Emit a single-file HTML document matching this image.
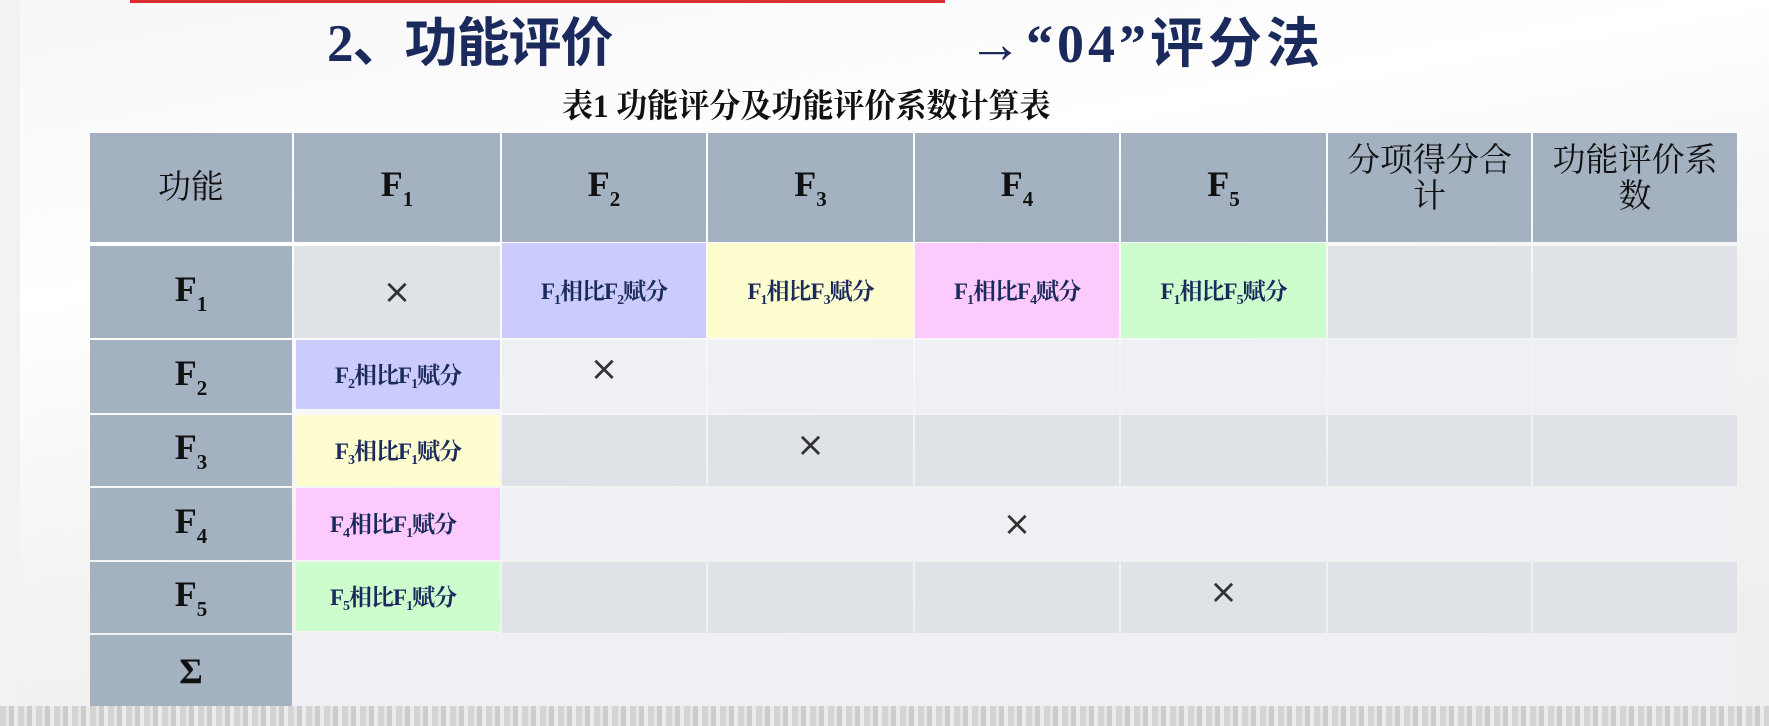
<!DOCTYPE html>
<html><head><meta charset="utf-8"><style>
*{margin:0;padding:0;box-sizing:border-box}
body{width:1769px;height:726px;overflow:hidden;position:relative;background:linear-gradient(170deg,#f7f7f7 0%,#ffffff 30%,#f2f2f2 60%,#eeeeee 100%);font-family:"Liberation Serif","Noto Serif CJK SC",serif}
.a{position:absolute}
.c{position:absolute;display:flex;align-items:center;justify-content:center;text-align:center}
.h{background:#a3b1c0;color:#111;font-weight:bold;font-size:36px}
.hz{font-family:"Liberation Serif","Noto Serif CJK SC",serif;font-weight:normal;font-size:33px;line-height:36px;color:#111}
.d{background:#dfe2e7}.l{background:#eff0f3}
.t{color:#1b2a5c;font-weight:bold;font-size:23px;letter-spacing:-1px}
.t sub{font-size:14px;vertical-align:-5px}
.h sub{font-size:21px;vertical-align:-10px}
.x{font-family:"DejaVu Sans",sans-serif;font-size:34px;color:#333;font-weight:normal}
</style></head><body>
<div class="a" style="left:0;top:0;width:20px;height:726px;background:#f2f2f2"></div>
<div class="a" style="left:130px;top:0;width:815px;height:3px;background:#d9302f"></div>
<div class="a" style="left:0;top:706px;width:1769px;height:20px;background:repeating-linear-gradient(90deg,#d4d4d4 0 6px,#e6e6e6 6px 9px,#cccccc 9px 14px,#ececec 14px 18px)"></div>
<div class="a" style="left:327px;top:12px;font-size:53px;font-weight:bold;color:#1b2a5c;font-family:'Liberation Serif','Noto Sans CJK SC',sans-serif;line-height:64px;white-space:nowrap;letter-spacing:-1px">2、功能评价</div>
<div class="a" style="left:968px;top:12px;font-size:54px;font-weight:bold;color:#1b2a5c;font-family:'Liberation Serif','Noto Sans CJK SC',sans-serif;line-height:64px;white-space:nowrap;letter-spacing:4px">→“04”评分法</div>
<div class="a" style="left:562px;top:88px;font-size:33px;font-weight:bold;color:#111;line-height:38px;white-space:nowrap;transform:scaleX(0.94);transform-origin:left">表1 功能评分及功能评价系数计算表</div>

<div class="c h hz" style="left:90px;top:133px;width:202px;height:109px"><span>功能</span></div>
<div class="c h" style="left:294px;top:133px;width:206px;height:109px"><span>F<sub>1</sub></span></div>
<div class="c h" style="left:502px;top:133px;width:204px;height:109px"><span>F<sub>2</sub></span></div>
<div class="c h" style="left:708px;top:133px;width:205px;height:109px"><span>F<sub>3</sub></span></div>
<div class="c h" style="left:915px;top:133px;width:204px;height:109px"><span>F<sub>4</sub></span></div>
<div class="c h" style="left:1121px;top:133px;width:205px;height:109px"><span>F<sub>5</sub></span></div>
<div class="c h hz" style="left:1328px;top:133px;width:203px;height:109px;padding-bottom:18px"><span>分项得分合<br>计</span></div>
<div class="c h hz" style="left:1533px;top:133px;width:204px;height:109px;padding-bottom:18px"><span>功能评价系<br>数</span></div>

<div class="c h" style="left:90px;top:246px;width:202px;height:92px"><span>F<sub>1</sub></span></div>
<div class="c h" style="left:90px;top:340px;width:202px;height:73px"><span>F<sub>2</sub></span></div>
<div class="c h" style="left:90px;top:415px;width:202px;height:71px"><span>F<sub>3</sub></span></div>
<div class="c h" style="left:90px;top:488px;width:202px;height:72px"><span>F<sub>4</sub></span></div>
<div class="c h" style="left:90px;top:562px;width:202px;height:71px"><span>F<sub>5</sub></span></div>
<div class="c h" style="left:90px;top:635px;width:202px;height:71px"><span>Σ</span></div>

<div class="c d x" style="left:294px;top:246px;width:206px;height:92px"><span>×</span></div>
<div class="c t" style="left:502px;top:243px;width:204px;height:95px;background:#ccccfc"><span>F<sub>1</sub>相比F<sub>2</sub>赋分</span></div>
<div class="c t" style="left:708px;top:243px;width:205px;height:95px;background:#fdfdd0"><span>F<sub>1</sub>相比F<sub>3</sub>赋分</span></div>
<div class="c t" style="left:915px;top:243px;width:204px;height:95px;background:#fccafc"><span>F<sub>1</sub>相比F<sub>4</sub>赋分</span></div>
<div class="c t" style="left:1121px;top:243px;width:205px;height:95px;background:#cdfccd"><span>F<sub>1</sub>相比F<sub>5</sub>赋分</span></div>
<div class="c d" style="left:1328px;top:246px;width:203px;height:92px"></div>
<div class="c d" style="left:1533px;top:246px;width:204px;height:92px"></div>

<div class="c t" style="left:296px;top:340px;width:204px;height:69px;background:#ccccfc"><span>F<sub>2</sub>相比F<sub>1</sub>赋分</span></div>
<div class="c l x" style="left:502px;top:340px;width:204px;height:73px;padding-bottom:16px"><span>×</span></div>
<div class="c l" style="left:708px;top:340px;width:205px;height:73px"></div>
<div class="c l" style="left:915px;top:340px;width:204px;height:73px"></div>
<div class="c l" style="left:1121px;top:340px;width:205px;height:73px"></div>
<div class="c l" style="left:1328px;top:340px;width:203px;height:73px"></div>
<div class="c l" style="left:1533px;top:340px;width:204px;height:73px"></div>

<div class="c t" style="left:296px;top:415px;width:204px;height:71px;background:#fdfdd0"><span>F<sub>3</sub>相比F<sub>1</sub>赋分</span></div>
<div class="c d" style="left:502px;top:415px;width:204px;height:71px"></div>
<div class="c d x" style="left:708px;top:415px;width:205px;height:71px;padding-bottom:12px"><span>×</span></div>
<div class="c d" style="left:915px;top:415px;width:204px;height:71px"></div>
<div class="c d" style="left:1121px;top:415px;width:205px;height:71px"></div>
<div class="c d" style="left:1328px;top:415px;width:203px;height:71px"></div>
<div class="c d" style="left:1533px;top:415px;width:204px;height:71px"></div>

<div class="c t" style="left:296px;top:488px;width:204px;height:72px;background:#fccafc;padding-right:10px"><span>F<sub>4</sub>相比F<sub>1</sub>赋分</span></div>
<div class="c l" style="left:502px;top:488px;width:204px;height:72px"></div>
<div class="c l" style="left:708px;top:488px;width:205px;height:72px"></div>
<div class="c l x" style="left:915px;top:488px;width:204px;height:72px"><span>×</span></div>
<div class="c l" style="left:1121px;top:488px;width:205px;height:72px"></div>
<div class="c l" style="left:1328px;top:488px;width:203px;height:72px"></div>
<div class="c l" style="left:1533px;top:488px;width:204px;height:72px"></div>

<div class="c t" style="left:296px;top:562px;width:204px;height:69px;background:#cdfccd;padding-right:10px"><span>F<sub>5</sub>相比F<sub>1</sub>赋分</span></div>
<div class="c d" style="left:502px;top:562px;width:204px;height:71px"></div>
<div class="c d" style="left:708px;top:562px;width:205px;height:71px"></div>
<div class="c d" style="left:915px;top:562px;width:204px;height:71px"></div>
<div class="c d x" style="left:1121px;top:562px;width:205px;height:71px;padding-bottom:12px"><span>×</span></div>
<div class="c d" style="left:1328px;top:562px;width:203px;height:71px"></div>
<div class="c d" style="left:1533px;top:562px;width:204px;height:71px"></div>

<div class="c l" style="left:294px;top:635px;width:206px;height:71px"></div>
<div class="c l" style="left:502px;top:635px;width:204px;height:71px"></div>
<div class="c l" style="left:708px;top:635px;width:205px;height:71px"></div>
<div class="c l" style="left:915px;top:635px;width:204px;height:71px"></div>
<div class="c l" style="left:1121px;top:635px;width:205px;height:71px"></div>
<div class="c l" style="left:1328px;top:635px;width:203px;height:71px"></div>
<div class="c l" style="left:1533px;top:635px;width:204px;height:71px"></div>
</body></html>
